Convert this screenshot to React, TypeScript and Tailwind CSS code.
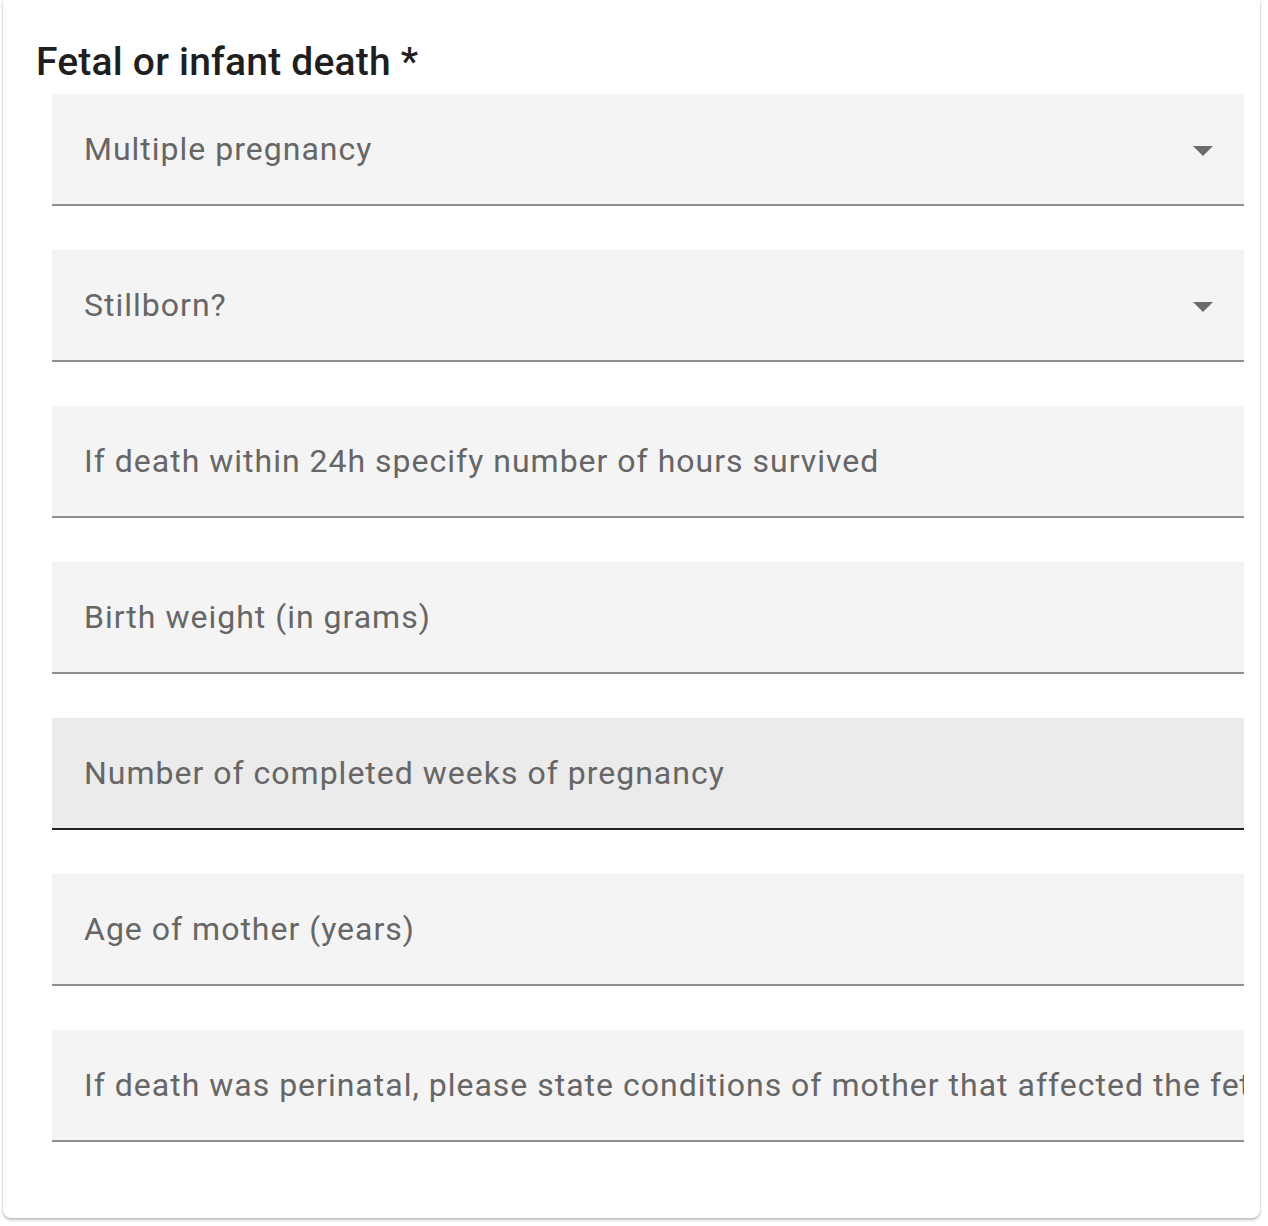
const fields: { label: string; select?: boolean; hover?: boolean }[] = [
  { label: 'Multiple pregnancy', select: true },
  { label: 'Stillborn?', select: true },
  { label: 'If death within 24h specify number of hours survived' },
  { label: 'Birth weight (in grams)' },
  { label: 'Number of completed weeks of pregnancy', hover: true },
  { label: 'Age of mother (years)' },
  { label: 'If death was perinatal, please state conditions of mother that affected the fetus and newborn' },
];

function Field({ label, select, hover }: { label: string; select?: boolean; hover?: boolean }) {
  return (
    <div
      className={
        'relative flex h-[112px] items-center overflow-hidden border-b-2 pl-[32px] ' +
        (hover ? 'bg-[#ebebeb] border-[#222222]' : 'bg-[#f4f4f4] border-[#8e8e8e]')
      }
    >
      <span className="whitespace-nowrap text-[32px] tracking-[1px] text-[#666666]">{label}</span>
      {select && (
        <svg className="absolute right-[31px] top-[52px]" width="20" height="10" viewBox="0 0 20 10">
          <path d="M0 0 L20 0 L10 10 Z" fill="#6b6b6b" />
        </svg>
      )}
    </div>
  );
}

export default function App() {
  return (
    <div className="min-h-screen bg-white pl-[3px] pr-[8px] pb-[8px]" style={{ fontFamily: 'Roboto, "Liberation Sans", sans-serif' }}>
      <div className="rounded-b-[8px] bg-white pb-[76px] pl-[33px] pr-[16px] shadow-[0_2px_3px_rgba(0,0,0,0.25),0_0_2px_rgba(0,0,0,0.12)]">
        <h2 className="pt-[38px] text-[39px] font-medium leading-[48px] tracking-[0.2px] text-[#1f1f1f]">Fetal or infant death *</h2>
        <div className="ml-[16px] mt-[8px] flex flex-col gap-[44px]">
          {fields.map((f) => (
            <Field key={f.label} {...f} />
          ))}
        </div>
      </div>
    </div>
  );
}
